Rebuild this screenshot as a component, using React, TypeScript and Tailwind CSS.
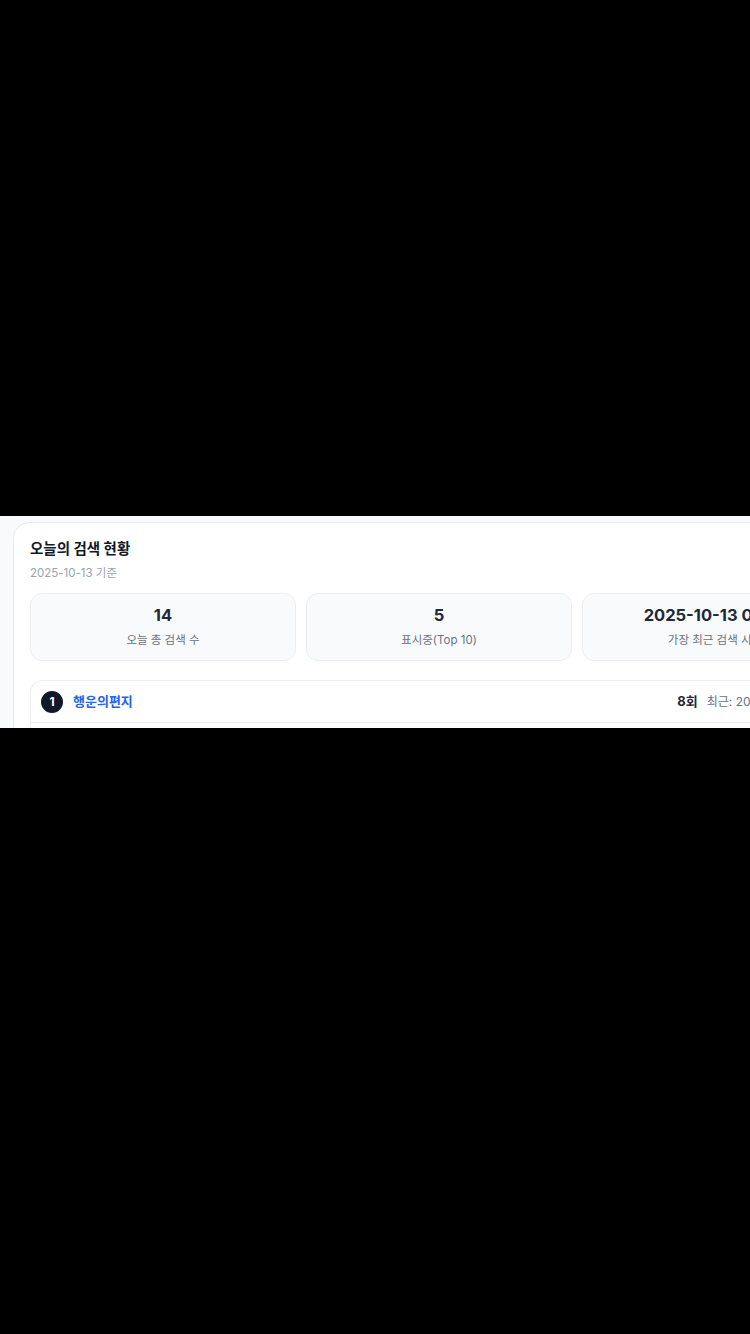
import React from 'react';

const stats = [
  { value: '14', label: '오늘 총 검색 수' },
  { value: '5', label: '표시중(Top 10)' },
  { value: '2025-10-13 09:12', label: '가장 최근 검색 시각' },
];

const ranks = [
  { rank: 1, keyword: '행운의편지', count: 8, last: '2025-10-13 09:12' },
  { rank: 2, keyword: '오늘의운세', count: 3, last: '2025-10-13 08:47' },
];

export default function App() {
  return (
    <div className="min-h-[1334px] bg-black pt-[516px] font-['Inter','Noto_Sans_CJK_KR',sans-serif]">
      {/* visible strip */}
      <div className="h-[212px] overflow-hidden bg-[#f9fafb] pl-[13px] pt-[6px]">
        <div className="w-[852px] rounded-2xl border border-[#e8eaee] bg-white px-4 pt-4">
          <h2 className="text-[14.5px] leading-5 font-bold text-[#111827]">오늘의 검색 현황</h2>
          <p className="mt-[6px] text-[11.5px] leading-4 text-[#9ca3af]">2025-10-13 기준</p>

          <div className="mt-[12px] grid grid-cols-3 gap-[10px]">
            {stats.map((s) => (
              <div
                key={s.label}
                className="flex flex-col items-center rounded-xl border border-[#eceef2] bg-[#f8fafc] pt-[9px] pb-[12px]"
              >
                <span className="text-[16.5px] leading-6 font-bold text-[#1f2937]">{s.value}</span>
                <span className="mt-[5px] text-[11.5px] leading-4 text-[#6b7280]">{s.label}</span>
              </div>
            ))}
          </div>

          <div className="mt-[19px] rounded-xl border border-[#eceef2]">
            {ranks.map((r, i) => (
              <div
                key={r.rank}
                className={
                  'flex h-[41px] items-center justify-between pl-[10px] pr-3' +
                  (i > 0 ? ' border-t border-[#eceef2]' : '')
                }
              >
                <div className="flex items-center gap-[10px]">
                  <span className="flex h-[22px] w-[22px] items-center justify-center rounded-full bg-[#111827] text-[12px] font-bold text-white">
                    {r.rank}
                  </span>
                  <span className="text-[13px] font-bold text-[#2563eb]">{r.keyword}</span>
                </div>
                <div className="flex items-center gap-[9px]">
                  <span className="text-[13px] font-bold text-[#1f2937]">{r.count}회</span>
                  <span className="text-[12px] text-[#6b7280]">최근: {r.last}</span>
                </div>
              </div>
            ))}
          </div>
        </div>
      </div>
    </div>
  );
}
